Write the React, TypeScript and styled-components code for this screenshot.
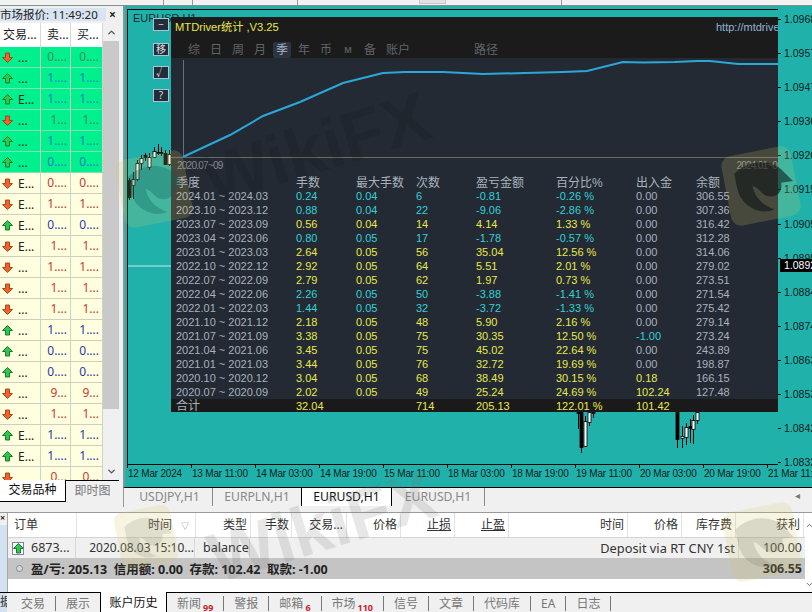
import React from 'react';
import styled, { createGlobalStyle } from 'styled-components';
import { ChevronDown, ChevronUp } from 'lucide-react';

const ui = `"Noto Sans", "Noto Sans CJK SC", sans-serif`;
const arial = `"Liberation Sans", "Noto Sans CJK SC", sans-serif`;

type Dir = 'up' | 'down';
interface Quote {
  dir: Dir;
  sym: string;
  bid: string;
  hot?: boolean;
}

const quotes: Quote[] = [
  { dir: 'down', sym: '...', bid: '0....', hot: true },
  { dir: 'up', sym: '...', bid: '1....', hot: true },
  { dir: 'up', sym: 'E...', bid: '1....', hot: true },
  { dir: 'down', sym: '...', bid: '1...', hot: true },
  { dir: 'up', sym: '...', bid: '1....', hot: true },
  { dir: 'up', sym: '...', bid: '0....', hot: true },
  { dir: 'down', sym: 'E...', bid: '0....' },
  { dir: 'down', sym: 'E...', bid: '1....' },
  { dir: 'up', sym: 'E...', bid: '0....' },
  { dir: 'down', sym: 'E...', bid: '1...' },
  { dir: 'down', sym: '...', bid: '1....' },
  { dir: 'down', sym: '...', bid: '1...' },
  { dir: 'down', sym: '...', bid: '1...' },
  { dir: 'up', sym: '...', bid: '1....' },
  { dir: 'up', sym: '...', bid: '0....' },
  { dir: 'up', sym: '...', bid: '0....' },
  { dir: 'down', sym: '...', bid: '9...' },
  { dir: 'down', sym: '...', bid: '1...' },
  { dir: 'up', sym: 'E...', bid: '1....' },
  { dir: 'up', sym: 'E...', bid: '1....' },
  { dir: 'down', sym: '', bid: '0...' },
];

const prices = [
  '1.0968', '1.0957', '1.0947', '1.0936', '1.0926', '1.0915', '1.0905',
  '1.0895', '1.0884', '1.0874', '1.0863', '1.0853', '1.0842', '1.0832',
];

const dates = [
  '12 Mar 2024', '13 Mar 11:00', '14 Mar 03:00', '14 Mar 19:00', '15 Mar 11:00', '18 Mar 03:00',
  '18 Mar 19:00', '19 Mar 11:00', '20 Mar 03:00', '20 Mar 19:00', '21 Mar 11:00',
];

// x, body top, body bottom, wick top, wick bottom, white body?
const candles: [number, number, number, number, number, boolean][] = [
  [128, 180, 197, 178, 200, false],
  [132, 179, 185, 172, 199, true],
  [136, 163, 179, 160, 181, true],
  [140, 158, 163, 155, 170, true],
  [144, 155, 157, 153, 161, false],
  [148, 157, 167, 153, 170, true],
  [153, 151, 157, 147, 158, true],
  [157, 152, 153, 144, 155, false],
  [160, 152, 153, 147, 156, false],
  [164, 153, 164, 150, 165, false],
  [168, 154, 164, 150, 166, true],
  [577, 412, 413, 412, 429, false],
  [580, 412, 447, 412, 453, false],
  [584, 421, 446, 416, 447, true],
  [588, 412, 422, 412, 426, true],
  [592, 412, 413, 412, 418, false],
  [676, 412, 439, 412, 448, false],
  [681, 436, 438, 426, 448, true],
  [685, 427, 437, 423, 445, true],
  [689, 426, 428, 419, 443, false],
  [692, 420, 429, 415, 444, true],
  [696, 412, 420, 412, 424, true],
];

const equity =
  '183,157 230,135 263,116 300,102 343,83 383,73 405,72 443,72 483,74 525,73 563,72 587,71 623,62 643,62.5 675,62 697,61 710,61 738,64 778,64';

const stats = [
  ['2024.01 ~ 2024.03', '0.24', '0.04', '6', '-0.81', '-0.26 %', '0.00', '306.55'],
  ['2023.10 ~ 2023.12', '0.88', '0.04', '22', '-9.06', '-2.86 %', '0.00', '307.36'],
  ['2023.07 ~ 2023.09', '0.56', '0.04', '14', '4.14', '1.33 %', '0.00', '316.42'],
  ['2023.04 ~ 2023.06', '0.80', '0.05', '17', '-1.78', '-0.57 %', '0.00', '312.28'],
  ['2023.01 ~ 2023.03', '2.64', '0.05', '56', '35.04', '12.56 %', '0.00', '314.06'],
  ['2022.10 ~ 2022.12', '2.92', '0.05', '64', '5.51', '2.01 %', '0.00', '279.02'],
  ['2022.07 ~ 2022.09', '2.79', '0.05', '62', '1.97', '0.73 %', '0.00', '273.51'],
  ['2022.04 ~ 2022.06', '2.26', '0.05', '50', '-3.88', '-1.41 %', '0.00', '271.54'],
  ['2022.01 ~ 2022.03', '1.44', '0.05', '32', '-3.72', '-1.33 %', '0.00', '275.42'],
  ['2021.10 ~ 2021.12', '2.18', '0.05', '48', '5.90', '2.16 %', '0.00', '279.14'],
  ['2021.07 ~ 2021.09', '3.38', '0.05', '75', '30.35', '12.50 %', '-1.00', '273.24'],
  ['2021.04 ~ 2021.06', '3.45', '0.05', '75', '45.02', '22.64 %', '0.00', '243.89'],
  ['2021.01 ~ 2021.03', '3.44', '0.05', '76', '32.72', '19.69 %', '0.00', '198.87'],
  ['2020.10 ~ 2020.12', '3.04', '0.05', '68', '38.49', '30.15 %', '0.18', '166.15'],
  ['2020.07 ~ 2020.09', '2.02', '0.05', '49', '25.24', '24.69 %', '102.24', '127.48'],
];

const statHeads = ['季度', '手数', '最大手数', '次数', '盈亏金额', '百分比%', '出入金', '余额'];
const panelTabs = ['综', '日', '周', '月', '季', '年', '币', 'M', '备'];
const chartTabs = ['USDJPY,H1', 'EURPLN,H1', 'EURUSD,H1', 'EURUSD,H1'];
const bottomTabs: [string, string?][] = [
  ['新闻', '99'], ['警报'], ['邮箱', '6'], ['市场', '110'], ['信号'], ['文章'], ['代码库'], ['EA'], ['日志'],
];

const tone = (row: string[], i: number) => {
  if (i === 0 || i === 7) return '#a9b2bd';
  if (i === 6) {
    const v = parseFloat(row[6]);
    return v === 0 ? '#a9b2bd' : v > 0 ? '#e8e84e' : '#35cfd6';
  }
  return row[4].startsWith('-') ? '#35cfd6' : '#e8e84e';
};

const Arrow = ({ dir }: { dir: Dir }) => (
  <svg width="11" height="11" viewBox="0 0 11 11">
    <path
      d={dir === 'up' ? 'M5.5 .5 L10.5 5.5 H7.5 V10 H3.5 V5.5 H.5 Z' : 'M5.5 10.5 L10.5 5.5 H7.5 V1 H3.5 V5.5 H.5 Z'}
      fill={dir === 'up' ? '#2fc84a' : '#f0622a'}
      stroke={dir === 'up' ? '#0b6d2a' : '#a83a12'}
      strokeWidth="0.9"
    />
  </svg>
);

const Badge = ({ size, eagle }: { size: number; eagle: string }) => (
  <svg width={size} height={size} viewBox="0 0 100 100">
    <rect x="8" y="8" width="84" height="84" rx="12" fill="#d8c868" fillOpacity="0.2" transform="rotate(-11 50 50)" />
    <path
      d="M18 36 C32 20 60 16 76 32 L88 44 L74 46 C76 58 68 64 58 62 C50 60 48 52 40 50 C42 62 50 72 66 78 C46 86 26 72 22 54 C20 46 20 42 18 36 Z"
      fill={eagle}
    />
  </svg>
);

const App = () => (
  <Page>
    <GlobalStyle />
    <TopStrip>
      <ToolSep $gap={163} />
      <ToolSep $gap={28} />
      <ToolSep $gap={104} />
      <ToolDots $gap={121} />
      <ToolSep $gap={115} />
    </TopStrip>
    <Workspace>
      <Market>
        <MarketTitle>
          <TitleLabel>市场报价: 11:49:20</TitleLabel>
          <CloseMark>×</CloseMark>
        </MarketTitle>
        <MarketBody>
          <QuoteList>
            <QuoteHead>
              <HeadCell>交易...</HeadCell>
              <HeadCell>卖...</HeadCell>
              <HeadCell>买...</HeadCell>
            </QuoteHead>
            {quotes.map((q, i) => (
              <QuoteRow key={i} $hot={!!q.hot}>
                <SymbolCell>
                  <Arrow dir={q.dir} />
                  {q.sym}
                </SymbolCell>
                <PriceCell $dir={q.dir} $hot={!!q.hot} $muted={i === 0 || i === 3}>{q.bid}</PriceCell>
                <PriceCell $dir={q.dir} $hot={!!q.hot} $muted={i === 0 || i === 3}>{q.bid}</PriceCell>
              </QuoteRow>
            ))}
          </QuoteList>
          <ScrollBar>
            <ScrollArrow><ChevronUp size={11} strokeWidth={3} /></ScrollArrow>
            <ScrollThumb />
            <ScrollArrow><ChevronDown size={11} strokeWidth={3} /></ScrollArrow>
          </ScrollBar>
        </MarketBody>
        <MarketTabs>
          <MarketTab $active>交易品种</MarketTab>
          <MarketTab>即时图</MarketTab>
        </MarketTabs>
      </Market>
      <ChartColumn>
        <ChartFrame>
          <ChartRow>
            <Plot>
              <CandleLayer width="650" height="455" viewBox="128 10 650 455">
                <line x1="128" y1="266" x2="171" y2="266" stroke="#c8ece8" />
                {candles.map(([x, bt, bb, wt, wb, white], i) => (
                  <g key={i}>
                    <line x1={x + 1.5} y1={wt} x2={x + 1.5} y2={wb} stroke="#000" />
                    <rect
                      x={x}
                      y={bt + 0.5}
                      width="3"
                      height={bb - bt}
                      fill={white ? '#fff' : '#000'}
                      stroke="#000"
                      strokeWidth="0.8"
                    />
                  </g>
                ))}
              </CandleLayer>
              <ChartTitle>EURUSD,H1</ChartTitle>
              <SideButtons>
                <SideButton>−</SideButton>
                <SideButton>移</SideButton>
                <SideButton>√</SideButton>
                <SideButton>?</SideButton>
              </SideButtons>
              <StatsPanel>
                <PanelHead>
                  <PanelTitleRow>
                    <PanelTitle>MTDriver统计 ,V3.25</PanelTitle>
                    <PanelLink>http://mtdrive</PanelLink>
                  </PanelTitleRow>
                  <PanelTabs>
                    {panelTabs.map(t => (
                      <PanelTab key={t} $active={t === '季'} $small={t === 'M'}>{t}</PanelTab>
                    ))}
                    <PanelTab $wide>账户</PanelTab>
                    <PanelTab $wide $far>路径</PanelTab>
                  </PanelTabs>
                </PanelHead>
                <EquityChart width="607" height="99" viewBox="171 58 607 99">
                  <line x1="183.5" y1="60" x2="183.5" y2="157" stroke="#6a6f72" />
                  <polyline points={equity} fill="none" stroke="#2aa8da" strokeWidth="2" />
                </EquityChart>
                <EquityDates>
                  <span>2020.07~09</span>
                  <span>2024.01~09</span>
                </EquityDates>
                <StatRow $head>
                  {statHeads.map(h => (
                    <span key={h}>{h}</span>
                  ))}
                </StatRow>
                {stats.map(row => (
                  <StatRow key={row[0]}>
                    {row.map((v, i) => (
                      <StatCell key={i} $color={tone(row, i)}>{v}</StatCell>
                    ))}
                  </StatRow>
                ))}
                <StatTotal>
                  <StatHeadCell>合计</StatHeadCell>
                  <StatCell $color="#e8e84e">32.04</StatCell>
                  <span />
                  <StatCell $color="#e8e84e">714</StatCell>
                  <StatCell $color="#e8e84e">205.13</StatCell>
                  <StatCell $color="#e8e84e">122.01 %</StatCell>
                  <StatCell $color="#e8e84e">101.42</StatCell>
                  <span />
                </StatTotal>
              </StatsPanel>
            </Plot>
            <PriceAxis>
              {prices.map(p => (
                <PriceTick key={p}>{p}</PriceTick>
              ))}
              <PriceTag>1.0892</PriceTag>
            </PriceAxis>
          </ChartRow>
          <DateAxis>
            {dates.map(d => (
              <DateTick key={d}>{d}</DateTick>
            ))}
          </DateAxis>
        </ChartFrame>
        <ChartTabs>
          {chartTabs.map((t, i) => (
            <ChartTab key={i} $active={i === 2}>{t}</ChartTab>
          ))}
          <TabScroll>◂</TabScroll>
        </ChartTabs>
      </ChartColumn>
    </Workspace>
    <Terminal>
      <DockStrip>
        <DockClose>×</DockClose>
        <DockBlue />
      </DockStrip>
      <OrderArea>
        <OrderHead>
          <HCell $w={69} $left>订单</HCell>
          <HCell $w={119} $pad={23}>时间<SortMark>▽</SortMark></HCell>
          <HCell $w={55}>类型</HCell>
          <HCell $w={41} $pad={2}>手数</HCell>
          <HCell $w={55}>交易...</HCell>
          <HCell $w={54}>价格</HCell>
          <HCell $w={54}><u>止损</u></HCell>
          <HCell $w={54}><u>止盈</u></HCell>
          <HCell $w={119}>时间</HCell>
          <HCell $w={54}>价格</HCell>
          <HCell $w={54}>库存费</HCell>
          <HCell $w={68}>获利</HCell>
        </OrderHead>
        <OrderRow>
          <RowId>
            <OrderIcon><Arrow dir="up" /></OrderIcon>
            6873...
          </RowId>
          <RowTime>2020.08.03 15:10...</RowTime>
          <RowType>balance</RowType>
          <RowNote>Deposit via RT CNY 1st</RowNote>
          <RowMoney>100.00</RowMoney>
        </OrderRow>
        <SummaryRow>
          <SummaryDot />
          <span>盈/亏: 205.13&nbsp; 信用额: 0.00&nbsp; 存款: 102.42&nbsp; 取款: -1.00</span>
          <SummaryTotal>306.55</SummaryTotal>
        </SummaryRow>
      </OrderArea>
      <TermScroll>
        <ChevronUp size={9} strokeWidth={2.5} />
        <ChevronDown size={9} strokeWidth={2.5} />
      </TermScroll>
    </Terminal>
    <BottomTabs>
      <DockLabel>据</DockLabel>
      <BottomTab>交易</BottomTab>
      <BottomTab $plain>展示</BottomTab>
      <ActiveBottomTab>账户历史</ActiveBottomTab>
      {bottomTabs.map(([label, count]) => (
        <BottomTab key={label}>
          {label}
          {count && <TabCount>{count}</TabCount>}
        </BottomTab>
      ))}
    </BottomTabs>
    <Mark $x={113} $y={148}><Badge size={82} eagle="rgba(10,90,90,0.3)" /></Mark>
    <Mark $x={719} $y={144}><Badge size={84} eagle="rgba(10,14,20,0.55)" /></Mark>
    <Mark $x={112} $y={503}><Badge size={68} eagle="rgba(120,120,110,0.18)" /></Mark>
    <Mark $x={720} $y={500}><Badge size={84} eagle="rgba(120,120,110,0.22)" /></Mark>
    <MarkText $x={200} $y={108} $color="rgba(0,0,0,0.09)">WikiFX</MarkText>
    <MarkText $x={206} $y={486} $color="rgba(110,110,110,0.17)">WikiFX</MarkText>
  </Page>
);

const GlobalStyle = createGlobalStyle`
  html, body {
    margin: 0;
    padding: 0;
    background: #f0f0f0;
  }
`;

const Page = styled.div`
  position: relative;
  width: 812px;
  height: 612px;
  overflow: hidden;
  display: flex;
  flex-direction: column;
  background: #f0f0f0;
  font-family: ${ui};
  font-size: 12px;
  color: #222;
`;

const TopStrip = styled.div`
  height: 5px;
  flex: none;
  display: flex;
  align-items: flex-start;
  background: #f2f2f2;
  border-bottom: 1px solid #7f908e;
`;

const ToolSep = styled.div<{ $gap: number }>`
  width: 1px;
  height: 5px;
  flex: none;
  margin-left: ${p => p.$gap}px;
  background: #9a9a9a;
`;

const ToolDots = styled.div<{ $gap: number }>`
  width: 25px;
  height: 3px;
  flex: none;
  margin-left: ${p => p.$gap}px;
  background: #e2e2e2;
  border: solid #c8c8c8;
  border-width: 0 1px 1px;
`;

const Workspace = styled.div`
  height: 501px;
  flex: none;
  display: flex;
`;

const Market = styled.div`
  width: 123px;
  flex: none;
  padding: 2px 4px 0 0;
  box-sizing: border-box;
  display: flex;
  flex-direction: column;
`;

const MarketTitle = styled.div`
  height: 15px;
  flex: none;
  display: flex;
  align-items: flex-start;
  justify-content: space-between;
`;

const TitleLabel = styled.div`
  width: 106px;
  height: 13px;
  line-height: 13px;
  background: #d8e4f1;
  font-size: 11.5px;
  white-space: nowrap;
  overflow: hidden;
`;

const CloseMark = styled.div`
  width: 13px;
  line-height: 13px;
  text-align: center;
  font-weight: 700;
  font-size: 12px;
`;

const MarketBody = styled.div`
  height: 457px;
  flex: none;
  display: flex;
  overflow: hidden;
`;

const QuoteList = styled.div`
  width: 103px;
  flex: none;
`;

const QuoteHead = styled.div`
  height: 24px;
  display: grid;
  grid-template-columns: 41px 30px 32px;
  background: #fff;
`;

const HeadCell = styled.div`
  padding-left: 3px;
  line-height: 23px;
  font-size: 12px;
  border-right: 1px solid #d8d8d8;
  white-space: nowrap;
  overflow: hidden;
  &:not(:first-child) {
    padding-left: 6px;
  }
`;

const QuoteRow = styled.div<{ $hot: boolean }>`
  height: 21px;
  box-sizing: border-box;
  display: grid;
  grid-template-columns: 41px 30px 32px;
  background: ${p => (p.$hot ? '#00f08e' : '#ffffe0')};
  border-bottom: 1px solid ${p => (p.$hot ? '#7fe0b8' : '#cfcfc0')};
`;

const SymbolCell = styled.div`
  display: flex;
  align-items: center;
  gap: 5px;
  padding-left: 2px;
  font-size: 12px;
  border-right: 1px solid #c8d8c4;
`;

const PriceCell = styled.div<{ $dir: Dir; $hot: boolean; $muted: boolean }>`
  text-align: right;
  padding-right: 3px;
  line-height: 20px;
  font-size: 12px;
  white-space: nowrap;
  color: ${p =>
    p.$muted ? '#3c8c5c' : p.$hot ? '#0a80c8' : p.$dir === 'up' ? '#2b3aa8' : '#c8392a'};
  border-right: 1px solid #c8d8c4;
`;

const ScrollBar = styled.div`
  width: 16px;
  flex: none;
  display: flex;
  flex-direction: column;
  background: #f0f0f0;
`;

const ScrollArrow = styled.div`
  height: 18px;
  display: flex;
  align-items: center;
  justify-content: center;
  color: #555;
`;

const ScrollThumb = styled.div`
  height: 368px;
  flex: none;
  margin-bottom: 53px;
  background: #c9c9c9;
`;

const MarketTabs = styled.div`
  height: 22px;
  flex: none;
  display: flex;
`;

const MarketTab = styled.div<{ $active?: boolean }>`
  box-sizing: border-box;
  width: ${p => (p.$active ? '66px' : '53px')};
  text-align: center;
  line-height: 20px;
  font-size: 12px;
  color: ${p => (p.$active ? '#111' : '#777')};
  background: ${p => (p.$active ? '#fff' : '#f0f0f0')};
  border-bottom: ${p => (p.$active ? '1px solid #000' : 'none')};
  border-right: ${p => (p.$active ? '1px solid #000' : 'none')};
  border-top: ${p => (p.$active ? 'none' : '1px solid #000')};
`;

const ChartColumn = styled.div`
  flex: 1;
  min-width: 0;
  display: flex;
  flex-direction: column;
`;

const ChartFrame = styled.div`
  height: 482px;
  flex: none;
  box-sizing: border-box;
  background: #20b2aa;
  border-left: 2px solid #7c9997;
  border-bottom: 1px solid #000;
  padding: 3px 0 0 2px;
  display: flex;
  flex-direction: column;
  overflow: hidden;
`;

const ChartRow = styled.div`
  height: 456px;
  flex: none;
  display: flex;
`;

const Plot = styled.div`
  position: relative;
  width: 651px;
  flex: none;
  box-sizing: border-box;
  border: 1px solid #000;
  border-right: none;
`;

const CandleLayer = styled.svg`
  position: absolute;
  inset: 0;
  display: block;
`;

const ChartTitle = styled.div`
  position: absolute;
  left: 5px;
  top: 2px;
  font-family: ${arial};
  font-size: 11px;
  color: #0c2a28;
`;

const SideButtons = styled.div`
  position: absolute;
  left: 25px;
  top: 8px;
  display: flex;
  flex-direction: column;
  gap: 10px;
`;

const SideButton = styled.div`
  width: 16px;
  height: 13px;
  box-sizing: border-box;
  border: 1px solid #a9c4d4;
  background: #232c38;
  color: #d8dde2;
  font-size: 10px;
  line-height: 11px;
  text-align: center;
  overflow: hidden;
  &:first-child {
    margin-bottom: 2px;
  }
`;

const StatsPanel = styled.div`
  position: absolute;
  left: 43px;
  right: 0;
  top: 7px;
  height: 395px;
  background: #232a33;
  font-family: ${arial};
  font-size: 11px;
  overflow: hidden;
`;

const PanelHead = styled.div`
  height: 41px;
  background: #1b1b1b;
  box-sizing: border-box;
  padding-top: 3px;
`;

const PanelTitleRow = styled.div`
  height: 22px;
  display: flex;
  justify-content: space-between;
  align-items: flex-start;
  padding-left: 4px;
`;

const PanelTitle = styled.div`
  color: #e6e650;
  font-size: 11.2px;
  line-height: 15px;
`;

const PanelLink = styled.div`
  width: 62px;
  overflow: hidden;
  white-space: nowrap;
  color: #8fb4d6;
  font-size: 11px;
  line-height: 15px;
`;

const PanelTabs = styled.div`
  display: flex;
  gap: 4px;
  padding-left: 14px;
`;

const PanelTab = styled.div<{ $active?: boolean; $small?: boolean; $wide?: boolean; $far?: boolean }>`
  height: 16px;
  min-width: 18px;
  box-sizing: border-box;
  padding: ${p => (p.$wide ? '0 3px' : '0')};
  margin-left: ${p => (p.$far ? '54px' : '0')};
  text-align: center;
  line-height: 16px;
  border-radius: 2px;
  background: ${p => (p.$active ? '#2b3542' : 'transparent')};
  color: ${p => (p.$active ? '#aab2bc' : p.$small ? '#55595e' : '#5f656c')};
  font-size: ${p => (p.$small ? '9px' : '12px')};
  font-weight: ${p => (p.$small ? 700 : 400)};
`;

const EquityChart = styled.svg`
  display: block;
`;

const EquityDates = styled.div`
  height: 18px;
  box-sizing: border-box;
  display: flex;
  justify-content: space-between;
  border-top: 1px solid #6a6a64;
  padding: 1px 0 0 6px;
  color: #858b90;
  font-size: 10px;
  letter-spacing: -0.75px;
  line-height: 13px;
  overflow: hidden;
  span:last-child {
    margin-right: -4px;
  }
`;

const StatRow = styled.div<{ $head?: boolean }>`
  height: 14px;
  display: grid;
  grid-template-columns: 120px 60px 60px 60px 80px 80px 60px 1fr;
  padding-left: 5px;
  line-height: 14px;
  white-space: nowrap;
  color: ${p => (p.$head ? '#a9b2bd' : 'inherit')};
  font-size: ${p => (p.$head ? '12px' : '11px')};
  span {
    position: relative;
    top: ${p => (p.$head ? '1px' : '0')};
  }
`;

const StatCell = styled.span<{ $color: string }>`
  color: ${p => p.$color};
`;

const StatHeadCell = styled.span`
  color: #a9b2bd;
  font-size: 12px;
`;

const StatTotal = styled(StatRow)`
  background: #1a1a1a;
`;

const PriceAxis = styled.div`
  position: relative;
  flex: 1;
  padding-top: 3px;
  font-family: ${arial};
  font-size: 10.5px;
  color: #0e2020;
`;

const PriceTick = styled.div`
  position: relative;
  height: 34.1px;
  padding-left: 6px;
  line-height: 14px;
  white-space: nowrap;
  &::before {
    content: '';
    position: absolute;
    left: 0;
    top: 7px;
    width: 3px;
    height: 1px;
    background: #000;
  }
`;

const PriceTag = styled.div`
  position: absolute;
  left: 2px;
  right: 0;
  top: 250px;
  height: 13px;
  padding-left: 4px;
  line-height: 13px;
  background: #000;
  color: #fff;
  white-space: nowrap;
`;

const DateAxis = styled.div`
  flex: 1;
  display: flex;
  padding-left: 1px;
  font-family: ${arial};
  font-size: 10px;
  letter-spacing: -0.2px;
  color: #0e2020;
`;

const DateTick = styled.div`
  position: relative;
  width: 64px;
  flex: none;
  line-height: 18px;
  white-space: nowrap;
  &::before {
    content: '';
    position: absolute;
    left: -1px;
    top: 0;
    width: 1px;
    height: 3px;
    background: #000;
  }
`;

const ChartTabs = styled.div`
  height: 19px;
  flex: none;
  position: relative;
  display: grid;
  grid-template-columns: 86px 88px 91px 93px 1fr;
  padding-left: 3px;
  border-left: 1px solid #999;
`;

const ChartTab = styled.div<{ $active?: boolean }>`
  box-sizing: border-box;
  height: 18px;
  text-align: center;
  line-height: 18px;
  font-size: 12.2px;
  white-space: nowrap;
  color: ${p => (p.$active ? '#111' : '#888')};
  background: ${p => (p.$active ? '#fff' : 'transparent')};
  border-left: ${p => (p.$active ? '1px solid #000' : 'none')};
  border-right: 1px solid ${p => (p.$active ? '#000' : '#888')};
  &:nth-child(2) {
    border-right: none;
  }
`;

const TabScroll = styled.div`
  position: absolute;
  right: 12px;
  top: 0;
  font-size: 10px;
  color: #777;
`;

const Terminal = styled.div`
  height: 80px;
  flex: none;
  margin-top: 5px;
  display: flex;
  background: #fff;
  border-top: 1px solid #9a9a9a;
  box-sizing: border-box;
`;

const DockStrip = styled.div`
  width: 7px;
  flex: none;
  display: flex;
  flex-direction: column;
  background: #f0f0f0;
`;

const DockClose = styled.div`
  height: 12px;
  font-size: 9px;
  font-weight: 700;
  line-height: 10px;
`;

const DockBlue = styled.div`
  flex: 1;
  background: #d2e2f2;
`;

const OrderArea = styled.div`
  flex: 1;
  min-width: 0;
  border-left: 1px solid #aaa;
`;

const TermScroll = styled.div`
  width: 7px;
  flex: none;
  display: flex;
  flex-direction: column;
  justify-content: space-between;
  padding: 8px 0 3px;
  box-sizing: border-box;
  overflow: hidden;
  color: #666;
`;

const OrderHead = styled.div`
  height: 25px;
  box-sizing: border-box;
  display: flex;
  background: #fff;
  border-bottom: 1px solid #d4d4d4;
`;

const HCell = styled.div<{ $w: number; $left?: boolean; $pad?: number }>`
  position: relative;
  width: ${p => p.$w}px;
  flex: none;
  box-sizing: border-box;
  padding: ${p => (p.$left ? '0 0 0 6px' : `0 ${p.$pad ?? 3}px 0 0`)};
  text-align: ${p => (p.$left ? 'left' : 'right')};
  line-height: 24px;
  font-size: 12px;
  color: #333;
  border-right: 1px solid #e2e2e2;
  white-space: nowrap;
`;

const SortMark = styled.span`
  position: absolute;
  right: 6px;
  top: 1px;
  font-size: 8px;
  color: #888;
`;

const OrderRow = styled.div`
  height: 20px;
  display: flex;
  align-items: center;
  background: #f0f0f0;
  line-height: 20px;
  font-size: 12.5px;
  color: #333;
`;

const RowId = styled.div`
  width: 68px;
  height: 100%;
  flex: none;
  box-sizing: border-box;
  display: flex;
  align-items: center;
  gap: 7px;
  padding-left: 4px;
  border-right: 1px solid #d8d8d8;
`;

const OrderIcon = styled.div`
  width: 12px;
  height: 13px;
  flex: none;
  box-sizing: border-box;
  border: 1px solid #789;
  background: #fff;
  display: flex;
  align-items: center;
  justify-content: center;
  overflow: hidden;
  svg {
    flex: none;
  }
`;

const RowTime = styled.div`
  width: 119px;
  flex: none;
  box-sizing: border-box;
  text-align: right;
  font-size: 12px;
  border-right: 1px solid #d8d8d8;
  white-space: nowrap;
`;

const RowType = styled.div`
  width: 55px;
  flex: none;
  box-sizing: border-box;
  padding-left: 8px;
  border-right: 1px solid #d8d8d8;
`;

const RowNote = styled.div`
  flex: 1;
  text-align: right;
  padding-right: 3px;
  font-size: 12.8px;
  white-space: nowrap;
`;

const RowMoney = styled.div`
  width: 67px;
  flex: none;
  box-sizing: border-box;
  padding-right: 3px;
  text-align: right;
  border-left: 1px solid #d8d8d8;
`;

const SummaryRow = styled.div`
  height: 21px;
  display: flex;
  align-items: center;
  background: #c4c4c4;
  padding: 0 3px 0 8px;
  font-weight: 700;
  font-size: 12.5px;
  color: #222;
`;

const SummaryDot = styled.div`
  width: 5px;
  height: 5px;
  margin-right: 8px;
  border-radius: 50%;
  border: 1px solid #888;
  background: #d8d8d8;
`;

const SummaryTotal = styled.div`
  margin-left: auto;
`;

const BottomTabs = styled.div`
  flex: 1;
  display: flex;
  padding-left: 11px;
  border-top: 1px solid #000;
  background: #f0f0f0;
  line-height: 18px;
  font-size: 12px;
  color: #777;
`;

const DockLabel = styled.div`
  width: 7px;
  flex: none;
  margin-left: -11px;
  margin-right: 4px;
  overflow: hidden;
  color: #333;
  background: #d2e2f2;
`;

const BottomTab = styled.div<{ $plain?: boolean }>`
  height: 15px;
  margin-top: 3px;
  flex: none;
  padding: 0 10px;
  border-right: ${p => (p.$plain ? 'none' : '1px solid #777')};
  line-height: 15px;
`;

const ActiveBottomTab = styled.div`
  flex: none;
  width: 67px;
  box-sizing: border-box;
  margin-top: -1px;
  padding-top: 2px;
  text-align: center;
  color: #111;
  background: #fff;
  border-left: 1px solid #000;
  border-right: 1px solid #000;
`;

const TabCount = styled.span`
  margin-left: 2px;
  position: relative;
  top: 3px;
  color: #c8202a;
  font-size: 9px;
  font-weight: 700;
`;

const Mark = styled.div<{ $x: number; $y: number }>`
  position: absolute;
  left: ${p => p.$x}px;
  top: ${p => p.$y}px;
  pointer-events: none;
`;

const MarkText = styled.div<{ $x: number; $y: number; $color: string }>`
  position: absolute;
  left: ${p => p.$x}px;
  top: ${p => p.$y}px;
  transform: rotate(-17deg);
  font-family: ${arial};
  font-size: 70px;
  font-weight: 700;
  line-height: 80px;
  color: ${p => p.$color};
  pointer-events: none;
`;

export default App;
